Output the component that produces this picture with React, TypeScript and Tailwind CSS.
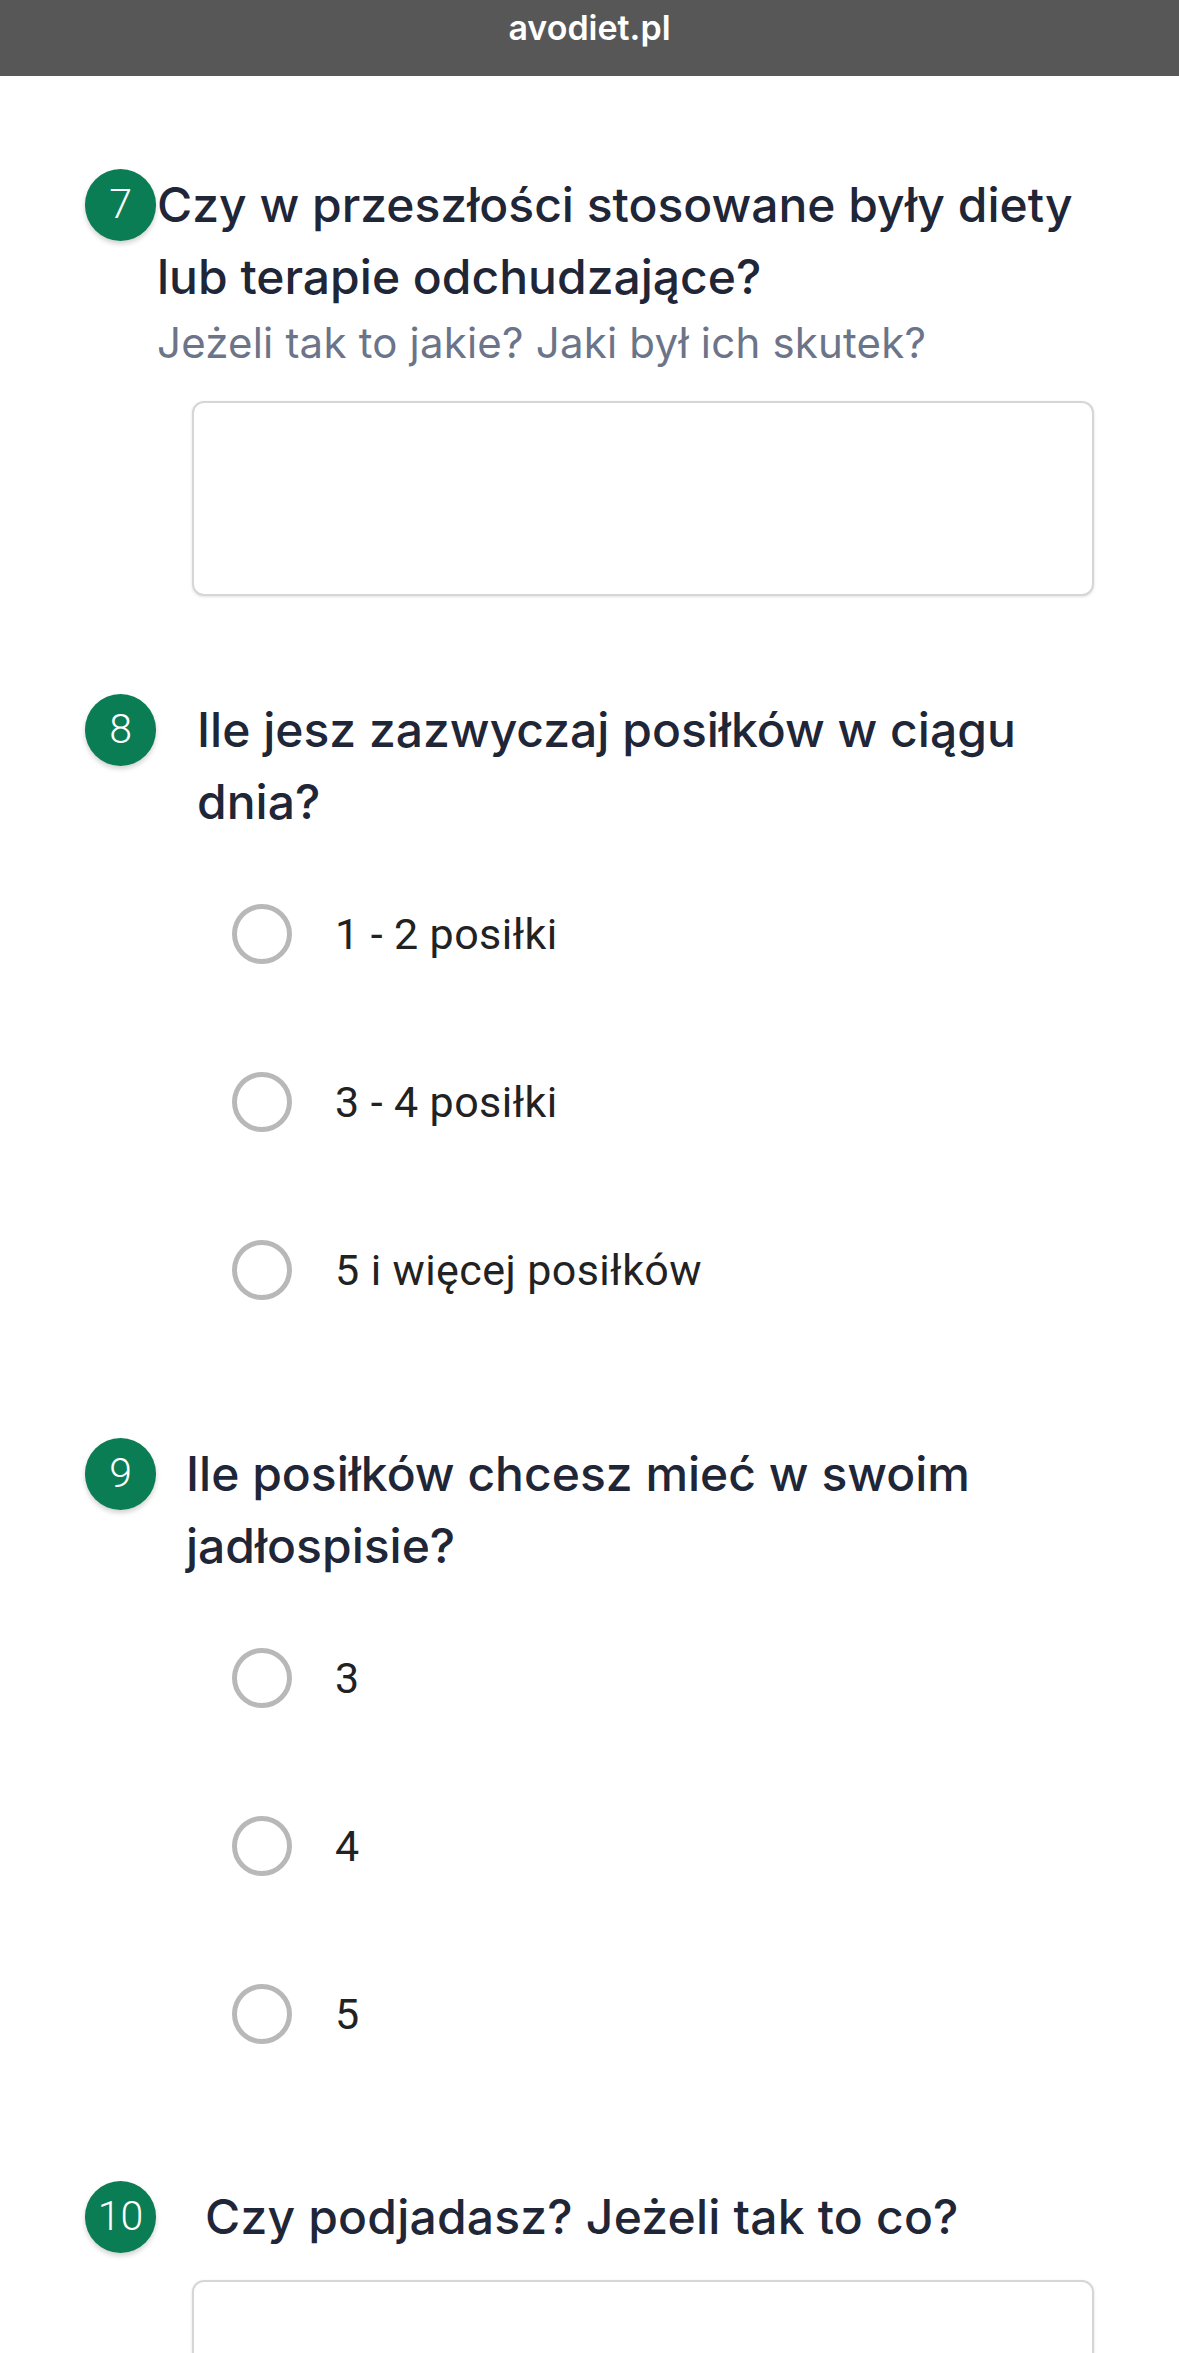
import React from 'react'

const qFont = { fontFamily: 'Inter, "Noto Sans", sans-serif' }
const optFont = { fontFamily: 'Roboto, "Noto Sans", sans-serif' }

const Badge = ({ n }: { n: number }) => (
  <div
    className="flex h-[72px] w-[71px] shrink-0 items-center justify-center rounded-full bg-[#0b7d55] text-[41px] font-light text-white shadow-[0_3px_5px_rgba(0,0,0,0.18)]"
    style={optFont}
  >
    {n}
  </div>
)

const Radio = ({ label }: { label: string }) => (
  <div className="flex h-[168px] items-center pl-[147px]">
    <span className="h-[60px] w-[60px] shrink-0 rounded-full border-[5px] border-[#b8b8b8] bg-white" />
    <span className="ml-[43px] text-[43px] tracking-[0.4px] text-[#222222]" style={optFont}>
      {label}
    </span>
  </div>
)

const TextBox = ({ className }: { className: string }) => (
  <div
    className={
      'ml-[107px] w-[902px] rounded-[12px] border-2 border-[#d6d6d6] bg-white shadow-[0_1px_3px_rgba(0,0,0,0.12)] ' +
      className
    }
  />
)

export default function App() {
  return (
    <div className="min-h-screen w-[1179px] overflow-hidden bg-white">
      {/* pasek adresu */}
      <div className="flex h-[76px] justify-center bg-[#575757] pt-[6px]">
        <span
          className="text-[34px] font-semibold leading-[44px] text-white"
          style={{ fontFamily: 'Inter, "Liberation Sans", sans-serif' }}
        >
          avodiet.pl
        </span>
      </div>

      <div className="pl-[85px] pt-[93px]">
        {/* pytanie 7 */}
        <div className="flex items-start">
          <Badge n={7} />
          <div className="ml-[1px]" style={qFont}>
            <h2 className="text-[48px] leading-[72px] font-medium text-[#1f2637]">
              Czy w przeszłości stosowane były diety
              <br />
              lub terapie odchudzające?
            </h2>
            <p className="mt-[4px] text-[42px] tracking-[0.2px] leading-[52px] text-[#6b7489]">
              Jeżeli tak to jakie? Jaki był ich skutek?
            </p>
          </div>
        </div>
        <div className="pt-[32px]">
          <TextBox className="h-[195px]" />
        </div>

        {/* pytanie 8 */}
        <div className="mt-[98px] flex items-start">
          <Badge n={8} />
          <h2
            className="ml-[41px] text-[48px] leading-[72px] font-medium text-[#1f2637]"
            style={qFont}
          >
            Ile jesz zazwyczaj posiłków w ciągu
            <br />
            dnia?
          </h2>
        </div>
        <div className="mt-[12px]">
          <Radio label="1 - 2 posiłki" />
          <Radio label="3 - 4 posiłki" />
          <Radio label="5 i więcej posiłków" />
        </div>

        {/* pytanie 9 */}
        <div className="mt-[84px] flex items-start">
          <Badge n={9} />
          <h2
            className="ml-[30px] text-[48px] leading-[72px] font-medium text-[#1f2637]"
            style={qFont}
          >
            Ile posiłków chcesz mieć w swoim
            <br />
            jadłospisie?
          </h2>
        </div>
        <div className="mt-[12px]">
          <Radio label="3" />
          <Radio label="4" />
          <Radio label="5" />
        </div>

        {/* pytanie 10 */}
        <div className="mt-[83px] flex items-start">
          <Badge n={10} />
          <h2
            className="ml-[49px] text-[48px] tracking-[0.2px] leading-[72px] font-medium text-[#1f2637]"
            style={qFont}
          >
            Czy podjadasz? Jeżeli tak to co?
          </h2>
        </div>
        <div className="pt-[27px]">
          <TextBox className="h-[195px]" />
        </div>
      </div>
    </div>
  )
}
